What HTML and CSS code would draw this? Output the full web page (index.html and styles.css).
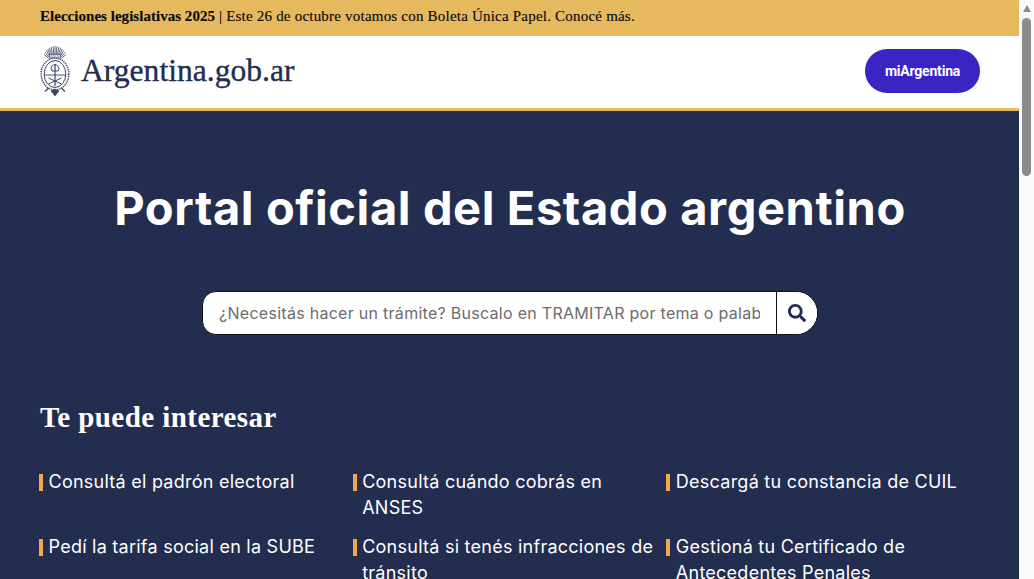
FILE: index.html
```html
<!DOCTYPE html>
<html lang="es">
<head>
<meta charset="utf-8">
<title>Argentina.gob.ar</title>
<link rel="stylesheet" href="styles.css">
</head>
<body>
<div class="page">
  <div class="notice"><strong class="notice-strong">Elecciones legislativas 2025</strong> | Este 26 de octubre votamos con Boleta Única Papel. Conocé más.</div>
  <header class="header">
    <a class="brand" href="#">
      <svg class="emblem" viewBox="0 0 30 50" width="30" height="50" aria-hidden="true">
        <g stroke="#3c4564" fill="none">
          <g stroke-width=".8">
            <path d="M15 0V9M13.2 .4 13.8 9M16.800 .4 16.200 9M11.200 1 12.600 9.200M18.800 1 17.400 9.200M9.400 1.800 11.600 9.600M20.600 1.800 18.400 9.600M7.800 3 10.600 10M22.200 3 19.400 10M6.400 4.400 9.800 10.600M23.600 4.400 20.200 10.600M5 6.200 9 11.400M25 6.200 21 11.400M4 8.400 8.400 12.200M26 8.400 21.600 12.200"/>
          </g>
          <rect x="9.500" y="8.500" width="11" height="3.500" fill="#c9ccd6" stroke-width=".6"/>
          <ellipse cx="15" cy="28" rx="13.800" ry="16" stroke-width="1.500" stroke-dasharray="1.300 .9"/>
          <ellipse cx="15" cy="28" rx="10.800" ry="13.500" stroke-width="1"/>
          <path d="M4.500 29H25.500" stroke-width=".9"/>
          <path d="M15 18V40" stroke-width="1.200"/>
          <path d="M11 22.500C11.500 17.500 18.500 17.500 19 22.500L18 25H12Z" stroke-width="1"/>
          <path d="M8.500 38 21.500 32M21.500 38 8.500 32" stroke-width="1"/>
          <path d="M11 45 15 50 19 45 15 43Z" fill="#3c4564" stroke-width=".6"/>
          <path d="M8.500 42 5 45.500M21.500 42 25 45.500" stroke-width="1.200"/>
        </g>
      </svg>
      <span class="brand-name">Argentina.gob.ar</span>
    </a>
    <a class="account" href="#">miArgentina</a>
  </header>
  <main class="hero">
    <h1 class="title">Portal oficial del Estado argentino</h1>
    <form class="search">
      <input class="search-input" type="text" placeholder="¿Necesitás hacer un trámite? Buscalo en TRAMITAR por tema o palabra clave">
      <button class="search-button" type="button" aria-label="Buscar">
        <svg viewBox="0 0 512 512" width="18" height="18" aria-hidden="true"><path fill="#232d4f" d="M505 442.700 405.300 343c-4.500-4.500-10.600-7-17-7H372c27.600-35.300 44-79.700 44-128C416 93.100 322.900 0 208 0S0 93.100 0 208s93.100 208 208 208c48.300 0 92.700-16.400 128-44v16.300c0 6.400 2.500 12.500 7 17l99.700 99.700c9.400 9.400 24.600 9.400 33.900 0l28.300-28.300c9.400-9.400 9.400-24.600.1-34zM208 336c-70.700 0-128-57.200-128-128 0-70.700 57.200-128 128-128 70.700 0 128 57.200 128 128 0 70.700-57.200 128-128 128z"/></svg>
      </button>
    </form>
    <h2 class="subtitle">Te puede interesar</h2>
    <ul class="links">
      <li class="link">Consultá el padrón electoral</li>
      <li class="link">Consultá cuándo cobrás en ANSES</li>
      <li class="link">Descargá tu constancia de CUIL</li>
      <li class="link">Pedí la tarifa social en la SUBE</li>
      <li class="link">Consultá si tenés infracciones de tránsito</li>
      <li class="link">Gestioná tu Certificado de Antecedentes Penales</li>
    </ul>
  </main>
</div>
<div class="scrollbar" aria-hidden="true">
  <span class="scroll-arrow"></span>
  <span class="scroll-thumb"></span>
</div>
</body>
</html>
```
FILE: styles.css
```css
* { box-sizing: border-box; }
html, body { margin: 0; height: 579px; overflow: hidden; }
body { display: flex; font-family: "Inter", "Liberation Sans", sans-serif; background: #232d4f; }
.page { width: 1019px; height: 579px; overflow: hidden; flex: none; }
.notice {
  height: 36px; padding: 0 40px; background: #e6b95f; color: #0b0b0b;
  font-family: "Liberation Serif", serif; font-size: 15px; line-height: 33px; white-space: nowrap;
  letter-spacing: .21px; -webkit-text-stroke: .15px #0b0b0b;
}
.notice-strong { font-weight: 700; letter-spacing: .03px; }
.header {
  height: 75px; padding: 0 39px 3px 40px; background: #fff; border-bottom: 3px solid #e6b95f;
  display: flex; align-items: center; justify-content: space-between;
}
.brand { display: flex; align-items: center; gap: 11px; text-decoration: none; }
.emblem { display: block; }
.brand-name { font-family: "Liberation Serif", serif; font-size: 31.600px; color: #232d4f; -webkit-text-stroke: .35px #232d4f; }
.account {
  width: 115px; height: 44px; border-radius: 22px; background: #3a24c4; color: #fff;
  font-family: "Roboto", sans-serif; font-weight: 700; font-size: 14px; letter-spacing: -.2px;
  display: flex; align-items: center; justify-content: center; text-decoration: none;
}
.hero { padding: 66px 39px 0 40px; color: #fff; }
.title { margin: 0; text-align: center; font-size: 47px; line-height: 62px; font-weight: 700; letter-spacing: .6px; }
.search { display: flex; width: 616px; height: 44px; margin: 52px auto 0; background: #fff; border: 1px solid #111; border-radius: 14px 22px 22px 14px; overflow: hidden; }
.search-input {
  flex: 1; min-width: 0; border: 0; outline: 0; background: transparent; padding: 0 16px;
  font-family: "Inter", sans-serif; font-size: 16px; letter-spacing: .28px; color: #333;
}
.search-input::placeholder { color: #6c6c6c; opacity: 1; }
.search-button { width: 41px; border: 0; border-left: 1px solid #111; background: #fff; padding: 0; display: flex; align-items: center; justify-content: center; }
.subtitle { margin: 64px 0 0; font-family: "Liberation Serif", serif; font-size: 29px; line-height: 36px; font-weight: 700; letter-spacing: .45px; }
.links { list-style: none; margin: 34px 0 0; padding: 0; display: grid; grid-template-columns: repeat(3, 1fr); column-gap: 1px; row-gap: 13px; }
.link { font-size: 18px; line-height: 26px; padding: 0 10px 0 8.500px; position: relative; letter-spacing: .25px; }
.link::before { content: ""; position: absolute; left: -1px; top: 5px; width: 4px; height: 17px; background: #f0a94f; }
.scrollbar { width: 15px; height: 579px; background: #fafafa; flex: none; display: flex; flex-direction: column; align-items: center; padding-top: 5px; }
.scroll-arrow { width: 0; height: 0; border-left: 4.500px solid transparent; border-right: 4.500px solid transparent; border-bottom: 7px solid #8c8c8c; }
.scroll-thumb { width: 9px; height: 158px; margin-top: 6px; border-radius: 4.500px; background: #8c8c8c; }
```
